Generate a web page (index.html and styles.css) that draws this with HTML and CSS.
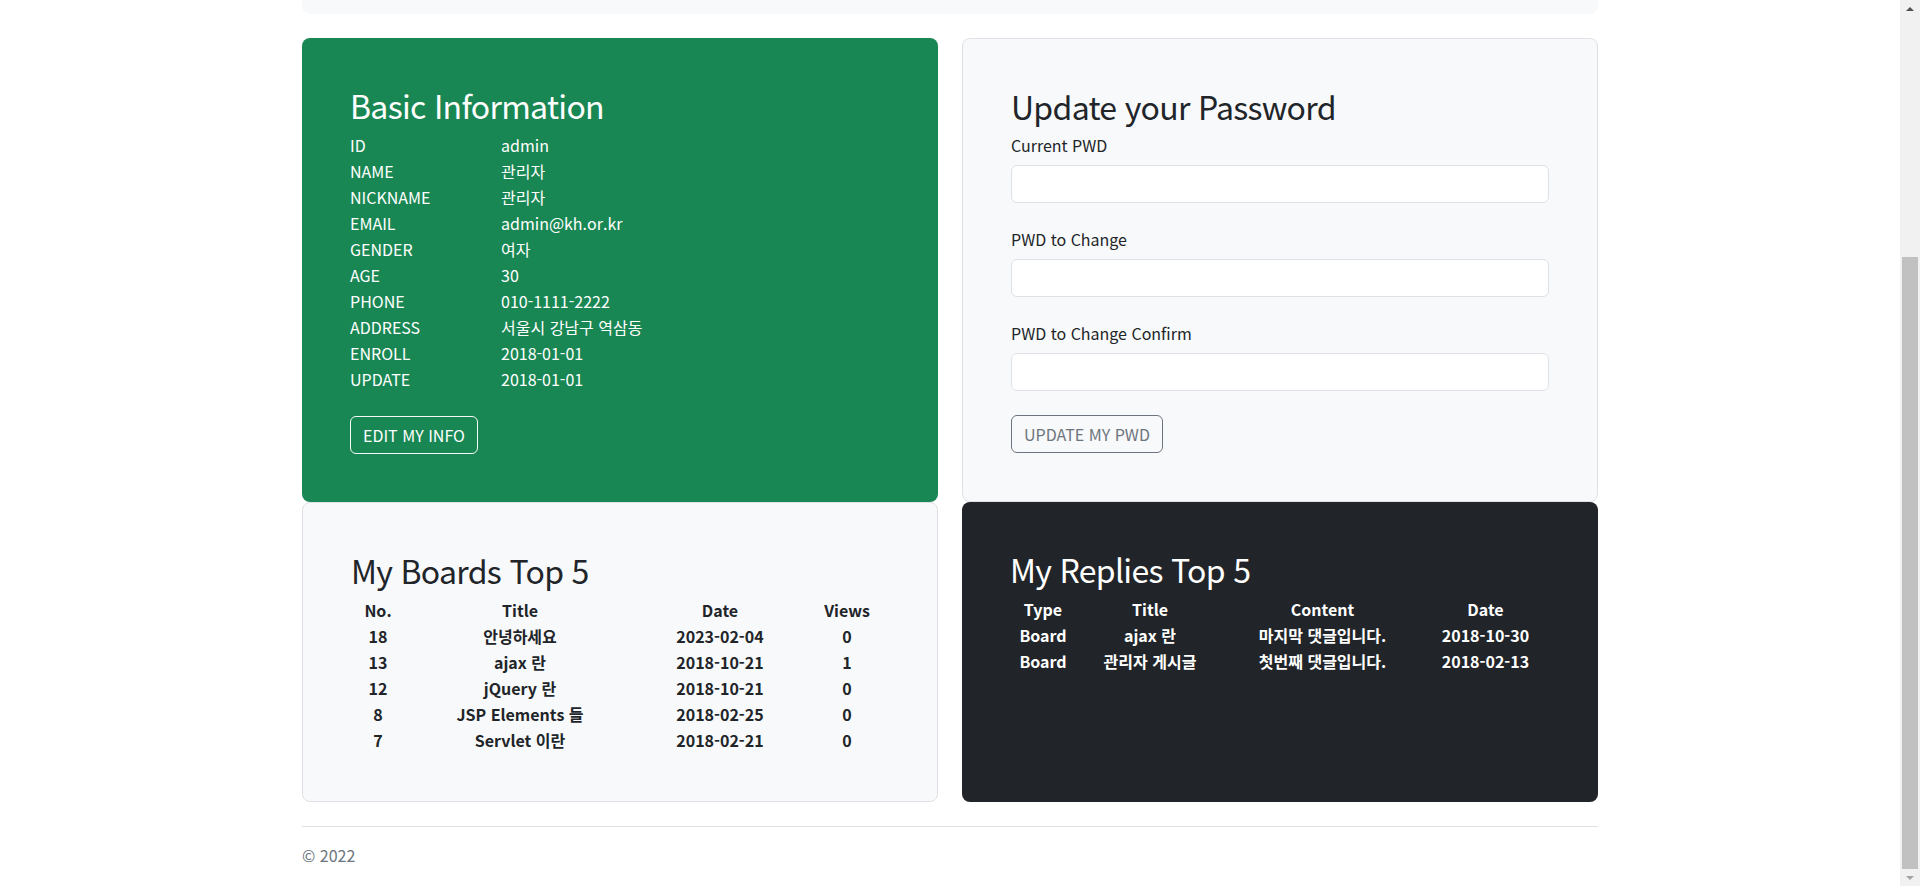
FILE: index.html
```html
<!DOCTYPE html>
<html lang="ko">
<head>
<meta charset="utf-8">
<title>My Page</title>
<link rel="stylesheet" href="styles.css">
</head>
<body>
<div class="app">
  <main class="page">
    <div class="container">
      <div class="hero-tail"></div>
      <div class="cards">
        <section class="card card-green">
          <h2 class="card-title">Basic Information</h2>
          <div class="info">
            <span>ID</span><span>admin</span>
            <span>NAME</span><span>관리자</span>
            <span>NICKNAME</span><span>관리자</span>
            <span>EMAIL</span><span>admin@kh.or.kr</span>
            <span>GENDER</span><span>여자</span>
            <span>AGE</span><span>30</span>
            <span>PHONE</span><span>010-1111-2222</span>
            <span>ADDRESS</span><span>서울시 강남구 역삼동</span>
            <span>ENROLL</span><span>2018-01-01</span>
            <span>UPDATE</span><span>2018-01-01</span>
          </div>
          <div class="actions">
            <button class="btn btn-light-outline" type="button">EDIT MY INFO</button>
          </div>
        </section>
        <section class="card card-light">
          <h2 class="card-title">Update your Password</h2>
          <form class="pwd-form">
            <div class="field">
              <label class="field-label">Current PWD</label>
              <input class="field-input" type="password">
            </div>
            <div class="field">
              <label class="field-label">PWD to Change</label>
              <input class="field-input" type="password">
            </div>
            <div class="field">
              <label class="field-label">PWD to Change Confirm</label>
              <input class="field-input" type="password">
            </div>
            <button class="btn btn-grey-outline" type="button">UPDATE MY PWD</button>
          </form>
        </section>
        <section class="card card-light">
          <h2 class="card-title">My Boards Top 5</h2>
          <table class="top-table">
            <colgroup><col class="w54"><col class="w230"><col class="w170"><col class="w84"></colgroup>
            <thead><tr><th>No.</th><th>Title</th><th>Date</th><th>Views</th></tr></thead>
            <tbody>
              <tr><td>18</td><td>안녕하세요</td><td>2023-02-04</td><td>0</td></tr>
              <tr><td>13</td><td>ajax 란</td><td>2018-10-21</td><td>1</td></tr>
              <tr><td>12</td><td>jQuery 란</td><td>2018-10-21</td><td>0</td></tr>
              <tr><td>8</td><td>JSP Elements 들</td><td>2018-02-25</td><td>0</td></tr>
              <tr><td>7</td><td>Servlet 이란</td><td>2018-02-21</td><td>0</td></tr>
            </tbody>
          </table>
        </section>
        <section class="card card-dark">
          <h2 class="card-title">My Replies Top 5</h2>
          <table class="top-table">
            <colgroup><col class="w66"><col class="w148"><col class="w197"><col class="w129"></colgroup>
            <thead><tr><th>Type</th><th>Title</th><th>Content</th><th>Date</th></tr></thead>
            <tbody>
              <tr><td>Board</td><td>ajax 란</td><td>마지막 댓글입니다.</td><td>2018-10-30</td></tr>
              <tr><td>Board</td><td>관리자 게시글</td><td>첫번째 댓글입니다.</td><td>2018-02-13</td></tr>
            </tbody>
          </table>
        </section>
      </div>
      <footer class="footer">© 2022</footer>
    </div>
  </main>
  <aside class="scrollbar" aria-hidden="true">
    <div class="sb-arrow sb-up"></div>
    <div class="sb-track"><div class="sb-thumb"></div></div>
    <div class="sb-arrow sb-down"></div>
  </aside>
</div>
</body>
</html>
```
FILE: styles.css
```css
* { box-sizing: border-box; }
html, body {
  margin: 0;
  padding: 0;
  height: 886px;
  overflow: hidden;
}
body {
  font-family: "Noto Sans CJK KR", "Noto Sans", sans-serif;
  font-size: 16px;
  line-height: 1.5;
  color: #212529;
  background: #fff;
}
.app {
  display: flex;
  height: 886px;
}
.page {
  flex: 1;
  min-width: 0;
}
.container {
  width: 1296px;
  margin: 0 auto;
}
.hero-tail {
  height: 14px;
  background: #f8f9fa;
  border-radius: 0 0 8px 8px;
  margin-bottom: 24px;
}
.cards {
  display: grid;
  grid-template-columns: 636px 636px;
  column-gap: 24px;
}
.card {
  padding: 48px;
  border-radius: 8px;
}
.card-green {
  background: #198754;
  color: #fff;
}
.card-light {
  background: #f8f9fa;
  border: 1px solid #dee2e6;
}
.card-dark {
  background: #212529;
  color: #fff;
}
.card-title {
  margin: 0 0 8px;
  font-size: 32px;
  font-weight: 400;
  line-height: 38.4px;
  letter-spacing: -0.7px;
}
.info {
  display: grid;
  grid-template-columns: 151px 1fr;
  grid-auto-rows: 26px;
  align-items: center;
}
.actions {
  margin-top: 24px;
}
.btn {
  display: inline-block;
  height: 38px;
  padding: 0 12px;
  font-family: inherit;
  font-size: 16px;
  line-height: 36px;
  background: transparent;
  border-radius: 6px;
  cursor: pointer;
}
.btn-light-outline {
  color: #fff;
  border: 1px solid #f8f9fa;
}
.btn-grey-outline {
  color: #6c757d;
  border: 1px solid #6c757d;
}
.pwd-form {
  margin: 0;
}
.field {
  margin-bottom: 24px;
}
.field-label {
  display: block;
  height: 24px;
  margin-bottom: 8px;
}
.field-input {
  display: block;
  width: 100%;
  height: 38px;
  border: 1px solid #dee2e6;
  border-radius: 6px;
  background: #fff;
}
.top-table {
  width: 100%;
  table-layout: fixed;
  border-collapse: collapse;
  text-align: center;
  font-weight: 700;
}
.top-table thead th {
  height: 25px;
  vertical-align: top;
}
.top-table th, .top-table td {
  height: 26px;
  padding: 0;
  white-space: nowrap;
}
.w54 { width: 54px; }
.w230 { width: 230px; }
.w170 { width: 170px; }
.w84 { width: 84px; }
.w66 { width: 66px; }
.w148 { width: 148px; }
.w197 { width: 197px; }
.w129 { width: 129px; }
.footer {
  margin-top: 24px;
  padding-top: 16px;
  border-top: 1px solid #dee2e6;
  color: #6c757d;
}
.scrollbar {
  width: 20px;
  flex: none;
  background: #f1f1f1;
  display: flex;
  flex-direction: column;
}
.sb-arrow {
  height: 17px;
  display: flex;
  align-items: center;
  justify-content: center;
}
.sb-up::before {
  content: "";
  border-left: 4px solid transparent;
  border-right: 4px solid transparent;
  border-bottom: 4px solid #505050;
}
.sb-down::before {
  content: "";
  border-left: 4px solid transparent;
  border-right: 4px solid transparent;
  border-top: 4px solid #a3a3a3;
}
.sb-track {
  flex: 1;
  display: flex;
  flex-direction: column;
  justify-content: flex-end;
  padding: 0 2px;
}
.sb-thumb {
  height: 612px;
  background: #c1c1c1;
}
```
